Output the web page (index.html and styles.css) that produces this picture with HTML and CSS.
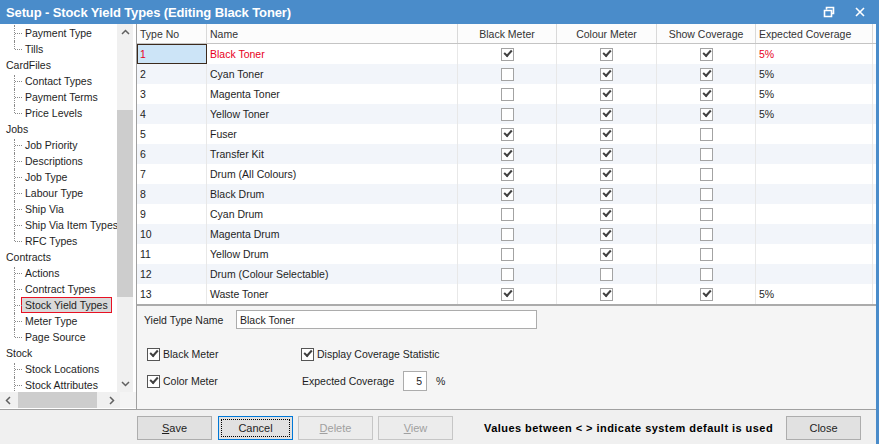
FILE: index.html
```html
<!DOCTYPE html>
<html lang="en">
<head>
    <meta charset="UTF-8">
    <meta name="viewport" content="width=device-width, initial-scale=1.0">
    <title>Setup - Stock Yield Types</title>
    <link rel="stylesheet" href="styles.css">
</head>
<body>
    <div class="window">
        <div class="titlebar">
            <span class="title">Setup - Stock Yield Types (Editing Black Toner)</span>
            <span class="title-btn">
                <svg width="12" height="12" viewBox="0 0 12 12"><path d="M3.5 3.5V1.5H10.5V7.5H8.5M1.5 4.5H8.5V10.5H1.5Z" fill="none" stroke="#fff" stroke-width="1.6"/></svg>
            </span>
            <span class="title-btn">
                <svg width="12" height="12" viewBox="0 0 12 12"><path d="M2 2L10 10M10 2L2 10" stroke="#fff" stroke-width="1.6"/></svg>
            </span>
        </div>

        <div class="main">
            <div class="tree-pane">
                <div class="tree-top">
                    <div class="tree">
                        <div class="node child">Payment Type</div>
                        <div class="node child last">Tills</div>
                        <div class="node">CardFiles</div>
                        <div class="node child first">Contact Types</div>
                        <div class="node child">Payment Terms</div>
                        <div class="node child last">Price Levels</div>
                        <div class="node">Jobs</div>
                        <div class="node child first">Job Priority</div>
                        <div class="node child">Descriptions</div>
                        <div class="node child">Job Type</div>
                        <div class="node child">Labour Type</div>
                        <div class="node child">Ship Via</div>
                        <div class="node child">Ship Via Item Types</div>
                        <div class="node child last">RFC Types</div>
                        <div class="node">Contracts</div>
                        <div class="node child first">Actions</div>
                        <div class="node child">Contract Types</div>
                        <div class="node child"><span class="sel">Stock Yield Types</span></div>
                        <div class="node child">Meter Type</div>
                        <div class="node child last">Page Source</div>
                        <div class="node">Stock</div>
                        <div class="node child first">Stock Locations</div>
                        <div class="node child">Stock Attributes</div>
                    </div>
                    <div class="vscroll">
                        <div class="arrow"><svg width="9" height="6" viewBox="0 0 9 6"><path d="M1 5L4.5 1.5L8 5" fill="none" stroke="#606060" stroke-width="1.5"/></svg></div>
                        <div class="v-gap"></div>
                        <div class="v-thumb"></div>
                        <div class="fill"></div>
                        <div class="arrow"><svg width="9" height="6" viewBox="0 0 9 6"><path d="M1 1L4.5 4.5L8 1" fill="none" stroke="#606060" stroke-width="1.5"/></svg></div>
                    </div>
                </div>
                <div class="hscroll">
                    <div class="arrow"><svg width="6" height="9" viewBox="0 0 6 9"><path d="M5 1L1.5 4.5L5 8" fill="none" stroke="#606060" stroke-width="1.5"/></svg></div>
                    <div class="h-thumb"></div>
                    <div class="fill"></div>
                    <div class="arrow"><svg width="6" height="9" viewBox="0 0 6 9"><path d="M1 1L4.5 4.5L1 8" fill="none" stroke="#606060" stroke-width="1.5"/></svg></div>
                    <div class="corner"></div>
                </div>
            </div>

            <div class="content-pane">
                <div class="grid">
                    <div class="grid-row head">
                        <div class="cell">Type No</div>
                        <div class="cell">Name</div>
                        <div class="cell mid">Black Meter</div>
                        <div class="cell mid">Colour Meter</div>
                        <div class="cell mid">Show Coverage</div>
                        <div class="cell">Expected Coverage</div>
                    </div>
                    <div class="grid-row current">
                        <div class="cell focus">1</div>
                        <div class="cell">Black Toner</div>
                        <div class="cell mid"><span class="cb on"></span></div>
                        <div class="cell mid"><span class="cb on"></span></div>
                        <div class="cell mid"><span class="cb on"></span></div>
                        <div class="cell">5%</div>
                    </div>
                    <div class="grid-row">
                        <div class="cell">2</div>
                        <div class="cell">Cyan Toner</div>
                        <div class="cell mid"><span class="cb"></span></div>
                        <div class="cell mid"><span class="cb on"></span></div>
                        <div class="cell mid"><span class="cb on"></span></div>
                        <div class="cell">5%</div>
                    </div>
                    <div class="grid-row">
                        <div class="cell">3</div>
                        <div class="cell">Magenta Toner</div>
                        <div class="cell mid"><span class="cb"></span></div>
                        <div class="cell mid"><span class="cb on"></span></div>
                        <div class="cell mid"><span class="cb on"></span></div>
                        <div class="cell">5%</div>
                    </div>
                    <div class="grid-row">
                        <div class="cell">4</div>
                        <div class="cell">Yellow Toner</div>
                        <div class="cell mid"><span class="cb"></span></div>
                        <div class="cell mid"><span class="cb on"></span></div>
                        <div class="cell mid"><span class="cb on"></span></div>
                        <div class="cell">5%</div>
                    </div>
                    <div class="grid-row">
                        <div class="cell">5</div>
                        <div class="cell">Fuser</div>
                        <div class="cell mid"><span class="cb on"></span></div>
                        <div class="cell mid"><span class="cb on"></span></div>
                        <div class="cell mid"><span class="cb"></span></div>
                        <div class="cell"></div>
                    </div>
                    <div class="grid-row">
                        <div class="cell">6</div>
                        <div class="cell">Transfer Kit</div>
                        <div class="cell mid"><span class="cb on"></span></div>
                        <div class="cell mid"><span class="cb on"></span></div>
                        <div class="cell mid"><span class="cb"></span></div>
                        <div class="cell"></div>
                    </div>
                    <div class="grid-row">
                        <div class="cell">7</div>
                        <div class="cell">Drum (All Colours)</div>
                        <div class="cell mid"><span class="cb on"></span></div>
                        <div class="cell mid"><span class="cb on"></span></div>
                        <div class="cell mid"><span class="cb"></span></div>
                        <div class="cell"></div>
                    </div>
                    <div class="grid-row">
                        <div class="cell">8</div>
                        <div class="cell">Black Drum</div>
                        <div class="cell mid"><span class="cb on"></span></div>
                        <div class="cell mid"><span class="cb on"></span></div>
                        <div class="cell mid"><span class="cb"></span></div>
                        <div class="cell"></div>
                    </div>
                    <div class="grid-row">
                        <div class="cell">9</div>
                        <div class="cell">Cyan Drum</div>
                        <div class="cell mid"><span class="cb"></span></div>
                        <div class="cell mid"><span class="cb on"></span></div>
                        <div class="cell mid"><span class="cb"></span></div>
                        <div class="cell"></div>
                    </div>
                    <div class="grid-row">
                        <div class="cell">10</div>
                        <div class="cell">Magenta Drum</div>
                        <div class="cell mid"><span class="cb"></span></div>
                        <div class="cell mid"><span class="cb on"></span></div>
                        <div class="cell mid"><span class="cb"></span></div>
                        <div class="cell"></div>
                    </div>
                    <div class="grid-row">
                        <div class="cell">11</div>
                        <div class="cell">Yellow Drum</div>
                        <div class="cell mid"><span class="cb"></span></div>
                        <div class="cell mid"><span class="cb on"></span></div>
                        <div class="cell mid"><span class="cb"></span></div>
                        <div class="cell"></div>
                    </div>
                    <div class="grid-row">
                        <div class="cell">12</div>
                        <div class="cell">Drum (Colour Selectable)</div>
                        <div class="cell mid"><span class="cb"></span></div>
                        <div class="cell mid"><span class="cb"></span></div>
                        <div class="cell mid"><span class="cb"></span></div>
                        <div class="cell"></div>
                    </div>
                    <div class="grid-row">
                        <div class="cell">13</div>
                        <div class="cell">Waste Toner</div>
                        <div class="cell mid"><span class="cb on"></span></div>
                        <div class="cell mid"><span class="cb on"></span></div>
                        <div class="cell mid"><span class="cb on"></span></div>
                        <div class="cell">5%</div>
                    </div>
                </div>

                <div class="edit-panel">
                    <div class="name-row">
                        <label class="name-label" for="yieldName">Yield Type Name</label>
                        <input class="text-box name-box" id="yieldName" type="text" value="Black Toner">
                    </div>
                    <div class="opts">
                        <div class="opt"><span class="cb dark on"></span>Black Meter</div>
                        <div class="opt"><span class="cb dark on"></span>Display Coverage Statistic</div>
                        <div class="opt"><span class="cb dark on"></span>Color Meter</div>
                        <div class="opt coverage">
                            <span class="cov-label">Expected Coverage</span>
                            <input class="text-box cov-box" type="text" value="5">
                            <span class="pct">%</span>
                        </div>
                    </div>
                </div>
            </div>
        </div>

        <div class="footer">
            <button class="btn"><u>S</u>ave</button>
            <button class="btn default"><span class="focus-rect">Cancel</span></button>
            <button class="btn" disabled><u>D</u>elete</button>
            <button class="btn" disabled><u>V</u>iew</button>
            <span class="note">Values between &lt; &gt; indicate system default is used</span>
            <button class="btn close">Close</button>
        </div>
    </div>
</body>
</html>
```

FILE: styles.css
```css
body {
    margin: 0;
    padding: 0;
    font-family: "Liberation Sans", Arial, sans-serif;
    font-size: 10.5px;
    color: #1e1e1e;
    background-color: #f0f0f0;
}

.window {
    width: 879px;
    height: 444px;
    box-sizing: border-box;
    border-right: 3px solid #4a8cca;
    display: flex;
    flex-direction: column;
    overflow: hidden;
}

/* title bar */

.titlebar {
    height: 24px;
    flex: none;
    background-color: #4a8cca;
    display: flex;
    align-items: center;
    padding: 0 4px 0 6px;
    margin-right: -3px;
}

.title {
    flex: 1;
    color: #fff;
    font-weight: bold;
    font-size: 13px;
    letter-spacing: -0.12px;
}

.title-btn {
    width: 31px;
    height: 24px;
    display: flex;
    align-items: center;
    justify-content: center;
}

.main {
    height: 385px;
    flex: none;
    display: flex;
}

/* tree */

.tree-pane {
    width: 136px;
    flex: none;
    background: #fff;
    display: flex;
    flex-direction: column;
    padding-bottom: 1px;
    box-sizing: border-box;
}

.tree-top {
    flex: 1;
    display: flex;
    min-height: 0;
}

.tree {
    width: 117px;
    overflow: hidden;
    padding-top: 1px;
}

.node {
    height: 16px;
    line-height: 16px;
    padding-left: 6px;
    white-space: nowrap;
    position: relative;
}

.node.child {
    padding-left: 25px;
}

.node.child::before {
    content: "";
    position: absolute;
    left: 14px;
    top: 0;
    height: 16px;
    border-left: 1px dotted #8a8a8a;
}

.node.child.first::before {
    top: 2px;
    height: 14px;
}

.node.child.last::before {
    height: 8px;
}

.node.child::after {
    content: "";
    position: absolute;
    left: 15px;
    top: 8px;
    width: 7px;
    border-top: 1px dotted #8a8a8a;
}

.sel {
    display: inline-block;
    margin-left: -4px;
    padding: 0 3px;
    line-height: 14px;
    border: 1px solid #e81123;
    background: #d9d9d9;
}

.vscroll {
    width: 16px;
    background: #f0f0f0;
    display: flex;
    flex-direction: column;
}

.arrow {
    width: 16px;
    height: 16px;
    flex: none;
    display: flex;
    align-items: center;
    justify-content: center;
}

.v-gap {
    height: 70px;
    flex: none;
}

.v-thumb {
    height: 187px;
    flex: none;
    background: #cdcdcd;
}

.fill {
    flex: 1;
}

.hscroll {
    height: 16px;
    flex: none;
    display: flex;
    background: #f0f0f0;
}

.h-thumb {
    width: 79px;
    margin-left: 2px;
    background: #cdcdcd;
}

.corner {
    width: 16px;
    background: #f4f4f4;
}

/* grid */

.content-pane {
    flex: 1;
    display: flex;
    flex-direction: column;
    border-left: 1px solid #a0a0a0;
}

.grid {
    height: 280px;
    flex: none;
    background: #fff;
    border-bottom: 2px solid #ababab;
}

.grid-row {
    display: grid;
    grid-template-columns: 70px 251px 99px 100px 99px 117px;
    height: 20px;
}

.grid-row:nth-child(odd) {
    background: #f2f5fa;
}

.grid-row.head {
    background: #fcfcfc;
    color: #333;
    height: 19px;
    border-bottom: 1px solid #c4c4c4;
}

.cell {
    padding: 0 3px;
    border-right: 1px solid #e8e8e8;
    display: flex;
    align-items: center;
    white-space: nowrap;
    overflow: hidden;
}

.head .cell {
    border-right-color: #d9d9d9;
}

.cell.mid {
    justify-content: center;
}

.current .cell {
    color: #e8001c;
}

.cell.focus {
    background: #cce4f7;
    outline: 1px solid #3b2a1d;
    outline-offset: -1px;
}

.cb {
    display: inline-block;
    width: 11px;
    height: 11px;
    border: 1px solid #a3a3a3;
    background: #fff;
    position: relative;
    flex: none;
}

.cb.on::after {
    content: "";
    position: absolute;
    left: 2px;
    top: 1px;
    width: 6px;
    height: 3px;
    border-left: 2px solid #404040;
    border-bottom: 2px solid #404040;
    transform: rotate(-48deg);
}

.cb.dark {
    border-color: #555;
}

/* edit panel */

.edit-panel {
    flex: 1;
    background: #f5f5f5;
    padding: 4px 0 0 7px;
}

.name-row {
    display: flex;
    align-items: center;
}

.name-label {
    width: 92px;
}

.text-box {
    box-sizing: border-box;
    border: 1px solid #acacac;
    background: #fff;
    font-family: inherit;
    font-size: inherit;
    color: #1e1e1e;
    margin: 0;
    outline: none;
}

.name-box {
    width: 301px;
    height: 19px;
    padding: 0 3px;
}

.opts {
    display: grid;
    grid-template-columns: 154px auto;
    grid-auto-rows: 20px;
    row-gap: 7px;
    margin: 15px 0 0 3px;
}

.opt {
    display: flex;
    align-items: center;
}

.opt .cb {
    margin-right: 3px;
}

.cov-label {
    width: 101px;
    margin-left: 1px;
}

.cov-box {
    width: 24px;
    height: 20px;
    text-align: right;
    padding: 0 4px;
}

.pct {
    margin-left: 9px;
}

/* footer */

.footer {
    flex: none;
    height: 34px;
    border-top: 1px solid #a0a0a0;
    display: flex;
    align-items: flex-start;
    padding: 6px 15px 0 137px;
    box-sizing: content-box;
    margin-right: -3px;
    padding-right: 18px;
}

.btn {
    width: 75px;
    height: 24px;
    margin: 0 5px 0 0;
    padding: 0;
    font-family: inherit;
    font-size: 11px;
    color: #1e1e1e;
    background: #e1e1e1;
    border: 1px solid #adadad;
}

.btn.default {
    border-color: #0078d7;
    padding: 2px;
    margin-left: 1px;
}

.focus-rect {
    display: flex;
    align-items: center;
    justify-content: center;
    height: 100%;
    box-sizing: border-box;
    border: 1px dotted #000;
}

.btn:disabled {
    color: #a0a0a0;
    background: #ececec;
    border-color: #c6c6c6;
}

.note {
    margin-left: 26px;
    line-height: 24px;
    font-weight: bold;
    font-size: 11px;
    letter-spacing: 0.45px;
    color: #000;
}

.btn.close {
    margin: 0 0 0 auto;
}
```
